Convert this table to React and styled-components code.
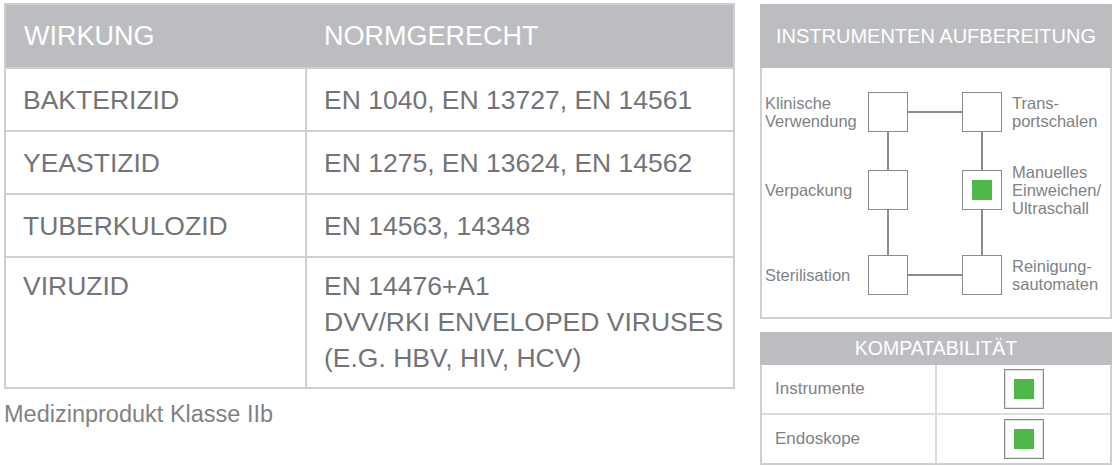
import React from "react";
import styled, { createGlobalStyle } from "styled-components";

const Global = createGlobalStyle`
  body {
    margin: 0;
    background: #fff;
    font-family: "Liberation Sans", Arial, sans-serif;
  }
`;

const Page = styled.div`
  display: flex;
  align-items: flex-start;
  padding: 3px 0 0 4px;
`;

const LeftCol = styled.div`
  width: 731px;
`;

const Table = styled.table`
  width: 100%;
  border-collapse: collapse;
  border: 2px solid #cfcfd0;
`;

const HeadCell = styled.th`
  height: 62px;
  padding: 0 0 0 18px;
  background: #bcbdc0;
  color: #fff;
  font-weight: normal;
  font-size: 27px;
  text-align: left;
  width: ${(p) => p.w || "auto"};
`;

const Cell = styled.td`
  height: ${(p) => (p.tall ? "119px" : "61px")};
  padding: ${(p) => (p.tall ? "10px 0 0 17px" : "0 0 0 17px")};
  border: 2px solid #cfcfd0;
  color: #737477;
  font-size: 26.5px;
  line-height: 36px;
  vertical-align: ${(p) => (p.tall ? "top" : "middle")};
`;

const Note = styled.p`
  margin: 12px 0 0;
  color: #808285;
  font-size: 23.5px;
`;

const RightCol = styled.div`
  width: 352px;
  margin: 1px 0 0 25px;
  display: flex;
  flex-direction: column;
  gap: 13px;
`;

const Panel = styled.div`
  border: 2px solid #cfcfd0;
  border-top: none;
`;

const PanelHead = styled.div`
  height: ${(p) => p.h}px;
  margin: 0 -2px;
  background: #bcbdc0;
  color: #fff;
  font-size: ${(p) => p.fs}px;
  display: flex;
  align-items: center;
  justify-content: center;
`;

const Diagram = styled.div`
  display: grid;
  grid-template-columns: 103px 40px 54px 40px auto;
  grid-template-rows: 40px 38px 40px 45px 40px;
  padding: 24px 0 22px 3px;
`;

const Label = styled.div`
  align-self: center;
  color: #808285;
  font-size: 16.5px;
  line-height: 18px;
  padding-left: ${(p) => (p.right ? "10px" : "0")};
  grid-column: ${(p) => p.col};
  grid-row: ${(p) => p.row};
`;

const Box = styled.div`
  box-sizing: border-box;
  width: 40px;
  height: 40px;
  border: 1.5px solid #8a8b8e;
  display: flex;
  align-items: center;
  justify-content: center;
  grid-column: ${(p) => p.col};
  grid-row: ${(p) => p.row};
`;

const HLine = styled.div`
  height: 1.5px;
  background: #8a8b8e;
  align-self: center;
  grid-column: ${(p) => p.col};
  grid-row: ${(p) => p.row};
`;

const VLine = styled.div`
  width: 1.5px;
  background: #8a8b8e;
  justify-self: center;
  grid-column: ${(p) => p.col};
  grid-row: ${(p) => p.row};
`;

const Fill = styled.div`
  width: 20px;
  height: 20px;
  background: #4db848;
`;

const CompRow = styled.div`
  display: grid;
  grid-template-columns: 175px 1fr;
  height: 48px;
  border-top: ${(p) => (p.first ? "none" : "2px solid #dcdcdd")};
`;

const CompLabel = styled.div`
  display: flex;
  align-items: center;
  padding-left: 13px;
  color: #808285;
  font-size: 17px;
  border-right: 2px solid #dcdcdd;
`;

const CompCell = styled.div`
  display: flex;
  align-items: center;
  justify-content: center;
`;

const Check = styled(Box)`
  box-shadow: inset 0 0 0 1px #e2e2e3;
`;

const rows = [
  ["BAKTERIZID", ["EN 1040, EN 13727, EN 14561"]],
  ["YEASTIZID", ["EN 1275, EN 13624, EN 14562"]],
  ["TUBERKULOZID", ["EN 14563, 14348"]],
  ["VIRUZID", ["EN 14476+A1", "DVV/RKI ENVELOPED VIRUSES", "(E.G. HBV, HIV, HCV)"]],
];

export default function App() {
  return (
    <>
      <Global />
      <Page>
        <LeftCol>
          <Table>
            <thead>
              <tr>
                <HeadCell w="282px">WIRKUNG</HeadCell>
                <HeadCell>NORMGERECHT</HeadCell>
              </tr>
            </thead>
            <tbody>
              {rows.map(([name, norms]) => (
                <tr key={name}>
                  <Cell tall={norms.length > 1}>{name}</Cell>
                  <Cell tall={norms.length > 1}>
                    {norms.map((n) => (
                      <div key={n}>{n}</div>
                    ))}
                  </Cell>
                </tr>
              ))}
            </tbody>
          </Table>
          <Note>Medizinprodukt Klasse IIb</Note>
        </LeftCol>

        <RightCol>
          <Panel>
            <PanelHead h={64} fs={20}>INSTRUMENTEN AUFBEREITUNG</PanelHead>
            <Diagram>
              <Label col={1} row={1}>Klinische<br />Verwendung</Label>
              <Box col={2} row={1} />
              <HLine col={3} row={1} />
              <Box col={4} row={1} />
              <Label right col={5} row={1}>Trans-<br />portschalen</Label>

              <VLine col={2} row={2} />
              <VLine col={4} row={2} />

              <Label col={1} row={3}>Verpackung</Label>
              <Box col={2} row={3} />
              <Box col={4} row={3}><Fill /></Box>
              <Label right col={5} row={3}>Manuelles<br />Einweichen/<br />Ultraschall</Label>

              <VLine col={2} row={4} />
              <VLine col={4} row={4} />

              <Label col={1} row={5}>Sterilisation</Label>
              <Box col={2} row={5} />
              <HLine col={3} row={5} />
              <Box col={4} row={5} />
              <Label right col={5} row={5}>Reinigung-<br />sautomaten</Label>
            </Diagram>
          </Panel>

          <Panel>
            <PanelHead h={33} fs={19.5}>KOMPATABILITÄT</PanelHead>
            {["Instrumente", "Endoskope"].map((t, i) => (
              <CompRow key={t} first={i === 0}>
                <CompLabel>{t}</CompLabel>
                <CompCell>
                  <Check><Fill /></Check>
                </CompCell>
              </CompRow>
            ))}
          </Panel>
        </RightCol>
      </Page>
    </>
  );
}
